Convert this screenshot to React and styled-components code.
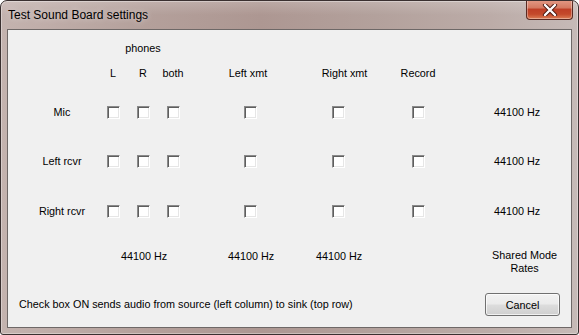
import React from "react";
import styled, { createGlobalStyle } from "styled-components";

const GlobalStyle = createGlobalStyle`
  html, body { margin: 0; padding: 0; background: #ffffff; }
  * { box-sizing: border-box; }
`;

const Window = styled.div`
  width: 579px;
  height: 335px;
  border: 1px solid #3a3030;
  border-radius: 7px 7px 3px 3px;
  background:
    linear-gradient(180deg, rgba(255,255,255,0.18) 0px, rgba(255,255,255,0) 14px),
    linear-gradient(90deg, #c4b3af 0%, #b4a09b 25%, #ad9792 45%, #b3a19c 65%, #bcaca8 85%, #c6bab7 100%);
  box-shadow: inset 0 0 0 1px rgba(255,255,255,0.35);
  display: flex;
  flex-direction: column;
  padding: 0 6px 6px 6px;
  font-family: "Liberation Sans", Arial, sans-serif;
  overflow: hidden;
`;

const TitleBar = styled.div`
  height: 28px;
  display: flex;
  align-items: flex-start;
  justify-content: space-between;
`;

const Title = styled.div`
  font-family: "Liberation Sans", Arial, sans-serif;
  font-size: 12px;
  color: #000;
  padding: 7px 0 0 1px;
  line-height: 15px;
  text-shadow: 0 0 6px rgba(255,255,255,0.6);
`;

const CloseButton = styled.div`
  width: 47px;
  height: 20px;
  margin-top: -1px;
  margin-right: -1px;
  border: 1px solid #5a2a22;
  border-top: none;
  border-radius: 0 0 4px 4px;
  background: linear-gradient(180deg, #e39a86 0%, #d47a62 40%, #bf3f26 50%, #c44a2b 75%, #dc7e56 100%);
  box-shadow: inset 0 0 0 1px rgba(255,255,255,0.35);
  display: flex;
  align-items: center;
  justify-content: center;
`;

const Client = styled.div`
  flex: 1;
  border: 1px solid #6e6867;
  background: #f0f0f0;
  display: flex;
  flex-direction: column;
  padding: 7px 0 0 0;
  font-size: 10.8px;
  color: #000;
`;

const Matrix = styled.div`
  display: grid;
  margin-left: 22px;
  grid-template-columns: 64px 38px 22px 38px 116px 60px 100px 98px;
  grid-template-rows: 22px 28px 50px 48px 52px 38px;
  align-items: center;
  justify-items: center;
  line-height: 13px;
  white-space: nowrap;
`;

const Cell = styled.div`
  grid-column: ${(p) => p.$col} / span ${(p) => p.$span || 1};
  grid-row: ${(p) => p.$row};
  margin-left: ${(p) => p.$shift || 0}px;
  text-align: center;
  align-self: ${(p) => p.$align || "center"};
`;

const Check = styled.span`
  display: block;
  width: 13px;
  height: 13px;
  background: #ffffff;
  border-style: solid;
  border-width: 1px;
  border-color: #8a8a8a #ffffff #ffffff #8a8a8a;
  box-shadow: inset 1px 1px 0 #5e5e5e, inset -1px -1px 0 #e6e6e6;
`;

const Footer = styled.div`
  display: flex;
  align-items: center;
  justify-content: space-between;
  margin-top: 18px;
  padding: 0 11px 0 11px;
`;

const Note = styled.span`
  line-height: 13px;
`;

const Button = styled.div`
  width: 75px;
  height: 23px;
  border: 1px solid #707070;
  border-radius: 3px;
  background: linear-gradient(180deg, #f2f2f2 0%, #ebebeb 48%, #dddddd 52%, #cfcfcf 100%);
  box-shadow: inset 0 0 0 1px rgba(255,255,255,0.7);
  display: flex;
  align-items: center;
  justify-content: center;
  font-size: 10.8px;
`;

const sources = ["Mic", "Left rcvr", "Right rcvr"];
const sinkCols = [2, 3, 4, 5, 6, 7];

export default function App() {
  return (
    <>
      <GlobalStyle />
      <Window>
        <TitleBar>
          <Title>Test Sound Board settings</Title>
          <CloseButton>
            <svg width="16" height="12" viewBox="0 0 16 12">
              <path d="M3 1 L13 11 M13 1 L3 11" stroke="#4a1a12" strokeWidth="4.2" strokeLinecap="round" />
              <path d="M3 1 L13 11 M13 1 L3 11" stroke="#ffffff" strokeWidth="2.4" strokeLinecap="round" />
            </svg>
          </CloseButton>
        </TitleBar>
        <Client>
          <Matrix>
            <Cell $col={2} $span={3} $row={1}>phones</Cell>
            <Cell $col={2} $row={2}>L</Cell>
            <Cell $col={3} $row={2}>R</Cell>
            <Cell $col={4} $row={2}>both</Cell>
            <Cell $col={5} $row={2} $shift={-4}>Left xmt</Cell>
            <Cell $col={6} $row={2} $shift={13}>Right xmt</Cell>
            <Cell $col={7} $row={2}>Record</Cell>
            {sources.map((s, i) => (
              <React.Fragment key={s}>
                <Cell $col={1} $row={i + 3}>{s}</Cell>
                {sinkCols.map((c) => (
                  <Cell key={c} $col={c} $row={i + 3}>
                    <Check />
                  </Cell>
                ))}
                <Cell $col={8} $row={i + 3}>44100 Hz</Cell>
              </React.Fragment>
            ))}
            <Cell $col={3} $row={6} $shift={2}>44100 Hz</Cell>
            <Cell $col={5} $row={6} $shift={2}>44100 Hz</Cell>
            <Cell $col={6} $row={6} $shift={2}>44100 Hz</Cell>
            <Cell $col={8} $row={6} $shift={15} $align="end">
              Shared Mode
              <br />
              Rates
            </Cell>
          </Matrix>
          <Footer>
            <Note>Check box ON sends audio from source (left column) to sink (top row)</Note>
            <Button>Cancel</Button>
          </Footer>
        </Client>
      </Window>
    </>
  );
}
